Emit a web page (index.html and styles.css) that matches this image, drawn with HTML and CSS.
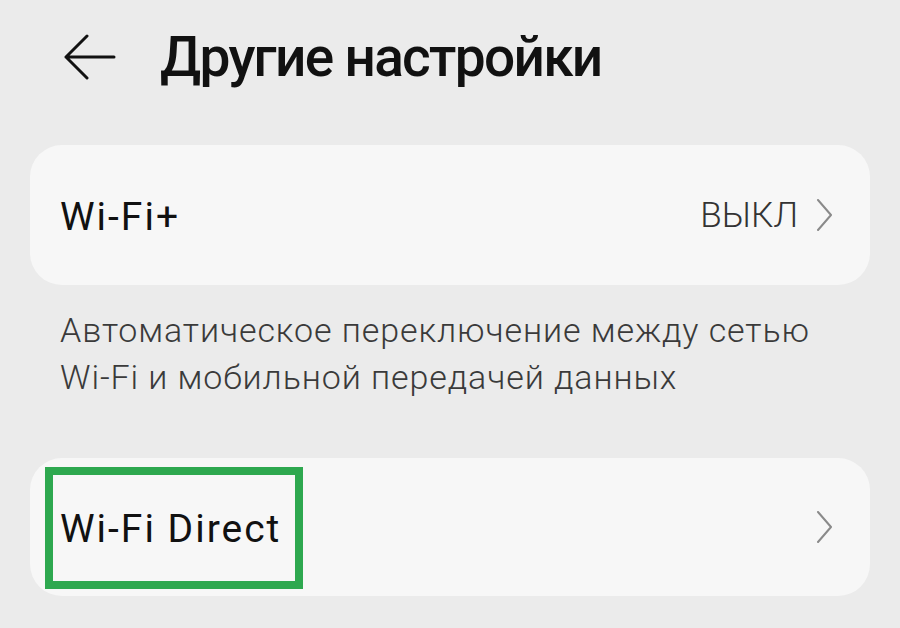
FILE: index.html
```html
<!DOCTYPE html>
<html lang="ru">
<head>
<meta charset="utf-8">
<title>Другие настройки</title>
<link rel="stylesheet" href="styles.css">
</head>
<body>
<div class="page">
  <header class="header">
    <svg class="back" width="52" height="48" viewBox="0 0 52 48">
      <path d="M23 3 L2 24 L23 45 M2 24 L50 24" fill="none" stroke="#111" stroke-width="3" stroke-linecap="round" stroke-linejoin="round"/>
    </svg>
    <h1 class="title">Другие настройки</h1>
  </header>

  <div class="card">
    <span class="label">Wi-Fi+</span>
    <span class="value">ВЫКЛ
      <svg class="chev" width="18" height="32" viewBox="0 0 18 32"><path d="M2 1 L15 16 L2 31" fill="none" stroke="#8a8a8a" stroke-width="2" stroke-linecap="round" stroke-linejoin="round"/></svg>
    </span>
  </div>

  <p class="desc">Автоматическое переключение между сетью<br>Wi-Fi и мобильной передачей данных</p>

  <div class="card card-direct">
    <span class="label">Wi-Fi Direct</span>
    <svg class="chev" width="18" height="32" viewBox="0 0 18 32"><path d="M2 1 L15 16 L2 31" fill="none" stroke="#8a8a8a" stroke-width="2" stroke-linecap="round" stroke-linejoin="round"/></svg>
    <div class="highlight"></div>
  </div>
</div>
</body>
</html>
```

FILE: styles.css
```css
html, body {
  margin: 0;
  padding: 0;
  background: #ebebeb;
}
body {
  font-family: Roboto, "Noto Sans", sans-serif;
  color: #111;
  width: 900px;
  height: 628px;
  overflow: hidden;
}
.page {
  padding: 0 30px;
}
.header {
  height: 114px;
  display: flex;
  align-items: center;
  padding-left: 34px;
}
.back {
  flex: none;
}
.title {
  margin: 0 0 0 44px;
  font-size: 55px;
  font-weight: 500;
  letter-spacing: -1.7px;
  line-height: 1;
}
.card {
  margin-top: 31px;
  height: 140px;
  border-radius: 32px;
  background: #f7f7f7;
  display: flex;
  align-items: center;
  justify-content: space-between;
  padding: 0 36px 0 30px;
  box-sizing: border-box;
  position: relative;
}
.label {
  font-size: 39px;
  font-weight: 400;
  letter-spacing: 2px;
  color: #111;
  padding-top: 4px;
}
.value {
  display: flex;
  align-items: center;
  gap: 18px;
  font-size: 35px;
  font-weight: 300;
  color: #333;
}
.desc {
  margin: 22px 0 0;
  padding: 0 30px;
  font-size: 34px;
  line-height: 47px;
  font-weight: 300;
  letter-spacing: 0.9px;
  color: #3a3a3a;
}
.card-direct {
  margin-top: 57px;
  height: 138px;
}
.highlight {
  position: absolute;
  left: 15px;
  top: 9px;
  width: 258px;
  height: 122px;
  box-sizing: border-box;
  border: 8px solid #2ea84f;
}
```
